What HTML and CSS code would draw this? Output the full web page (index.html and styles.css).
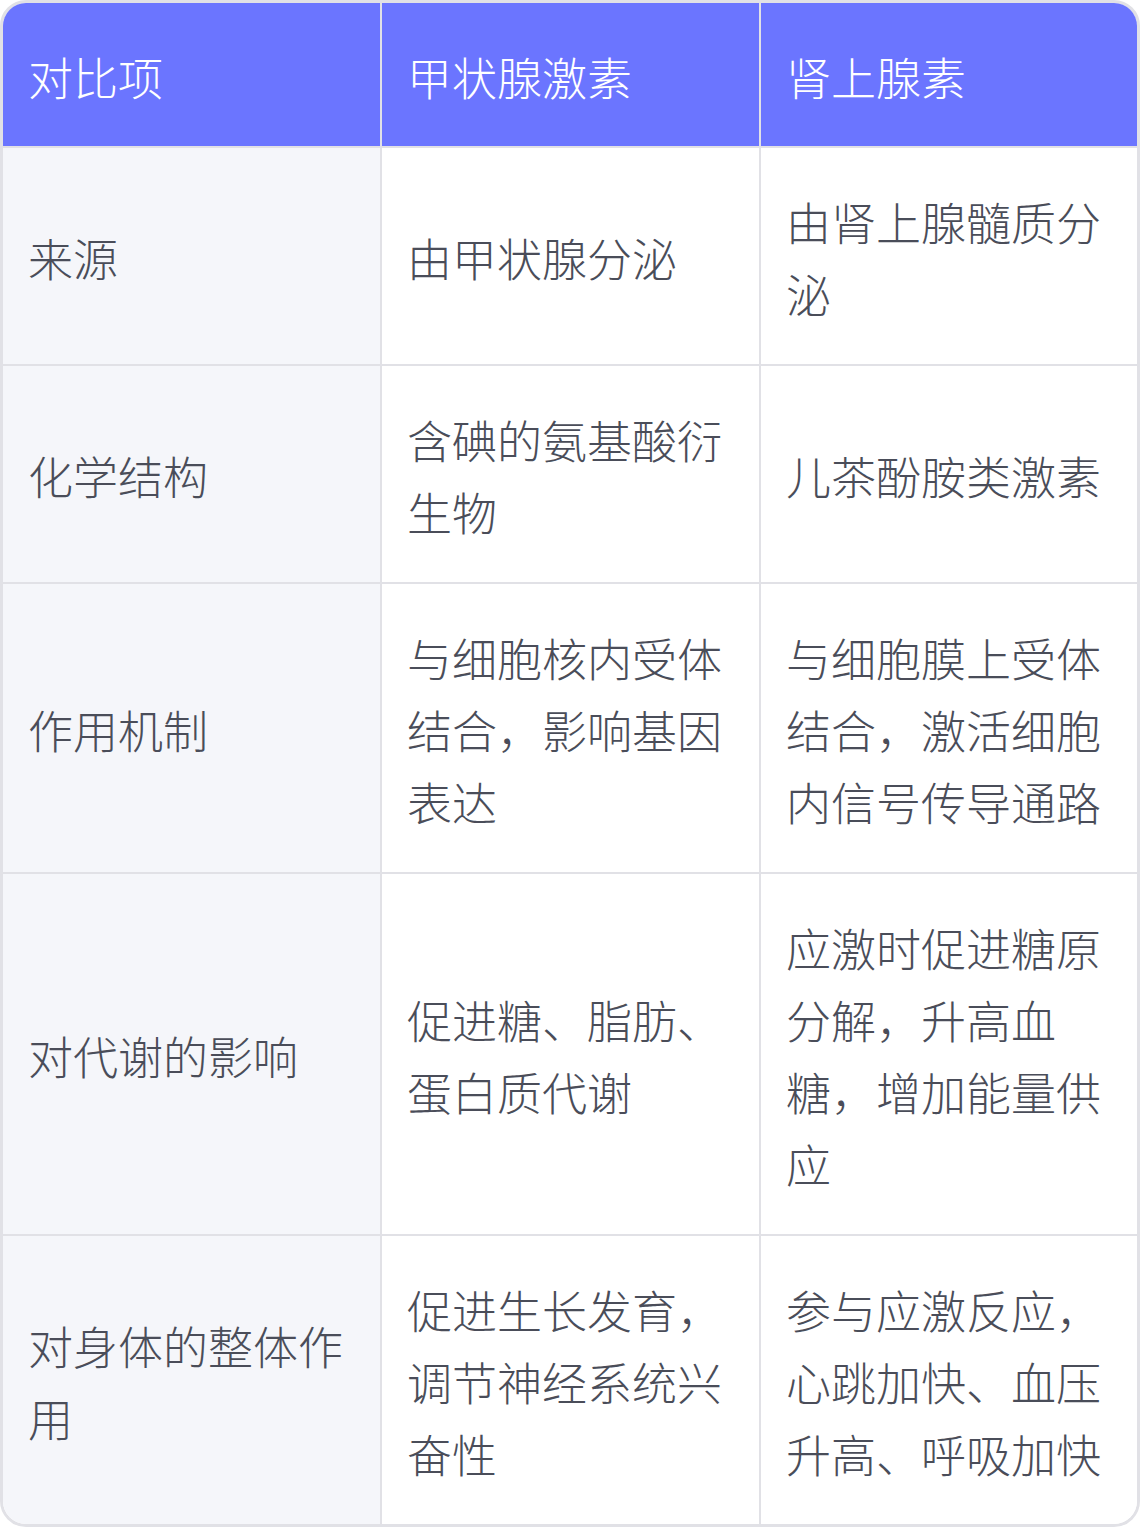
FILE: index.html
```html
<!DOCTYPE html>
<html lang="zh">
<head>
<meta charset="utf-8">
<link rel="stylesheet" href="styles.css">
</head>
<body>
<div class="table">
  <div class="cell head">对比项</div>
  <div class="cell head">甲状腺激素</div>
  <div class="cell head last-col">肾上腺素</div>

  <div class="cell label">来源</div>
  <div class="cell">由甲状腺分泌</div>
  <div class="cell last-col">由肾上腺髓质分泌</div>

  <div class="cell label">化学结构</div>
  <div class="cell">含碘的氨基酸衍生物</div>
  <div class="cell last-col">儿茶酚胺类激素</div>

  <div class="cell label">作用机制</div>
  <div class="cell">与细胞核内受体结合，影响基因表达</div>
  <div class="cell last-col">与细胞膜上受体结合，激活细胞内信号传导通路</div>

  <div class="cell label">对代谢的影响</div>
  <div class="cell">促进糖、脂肪、蛋白质代谢</div>
  <div class="cell last-col">应激时促进糖原分解，升高血糖，增加能量供应</div>

  <div class="cell label last-row">对身体的整体作用</div>
  <div class="cell last-row">促进生长发育，调节神经系统兴奋性</div>
  <div class="cell last-col last-row">参与应激反应，心跳加快、血压升高、呼吸加快</div>
</div>
</body>
</html>
```
FILE: styles.css
```css
html, body {
  margin: 0;
  padding: 0;
  background: #ffffff;
}
.table {
  width: 1140px;
  box-sizing: border-box;
  border: 3px solid #e1e1e6;
  border-radius: 26px;
  overflow: hidden;
  display: grid;
  grid-template-columns: 379px 379px 1fr;
  font-family: "Noto Sans CJK SC", "Noto Sans", sans-serif;
  font-size: 45px;
  font-weight: 300;
  line-height: 72px;
  color: #4a4d59;
}
.cell {
  box-sizing: border-box;
  padding: 38px 31px 34px 25px;
  border-right: 2px solid #e1e1e6;
  border-bottom: 2px solid #e1e1e6;
  display: flex;
  align-items: center;
  background: #ffffff;
}
.cell.head {
  background: #6b75ff;
  color: #ffffff;
  padding-top: 38px;
  padding-bottom: 33px;
}
.cell.label {
  background: #f5f6fa;
}
.cell.last-col {
  border-right: none;
}
.cell.last-row {
  border-bottom: none;
}
```
